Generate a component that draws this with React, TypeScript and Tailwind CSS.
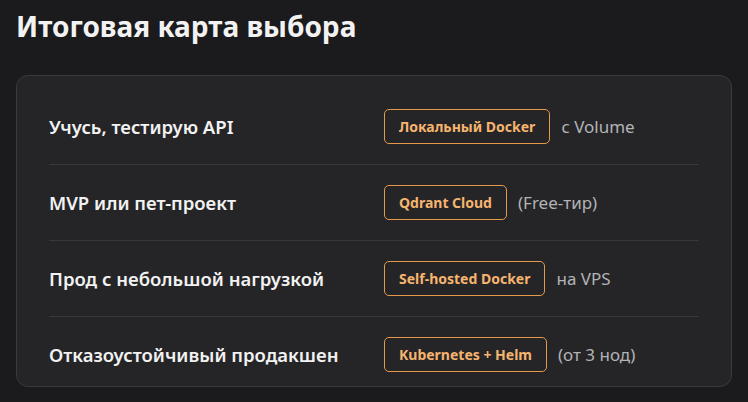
import React from "react";

const rows = [
  { label: "Учусь, тестирую API", badge: "Локальный Docker", note: "с Volume" },
  { label: "MVP или пет-проект", badge: "Qdrant Cloud", note: "(Free-тир)" },
  { label: "Прод с небольшой нагрузкой", badge: "Self-hosted Docker", note: "на VPS" },
  { label: "Отказоустойчивый продакшен", badge: "Kubernetes + Helm", note: "(от 3 нод)" },
];

export default function App() {
  return (
    <div
      className="w-[748px] h-[402px] bg-[#1b1b1d] overflow-hidden"
      style={{ fontFamily: '"Noto Sans", "Open Sans", sans-serif' }}
    >
      <div className="px-4 pt-[6px]">
        <h1 className="text-[28px] leading-[40px] font-bold text-[#f2f2f2]">Итоговая карта выбора</h1>
        <div className="mt-[29px] w-[716px] rounded-[12px] border border-[#3a3a3d] bg-[#252527] px-[32px] pt-[13px]">
          {rows.map((r, i) => (
            <div
              key={i}
              className={`flex items-center ${i < rows.length - 1 ? "border-b border-[#38383b] pt-5 pb-5" : "pt-5 pb-[14px]"}`}
            >
              <div className="w-[335px] shrink-0 text-[18.5px] font-semibold text-[#f2f2f2]">{r.label}</div>
              <div className="h-[35px] flex items-center px-[14px] rounded-[5px] border border-[#e39a4c] text-[14px] font-bold text-[#f6b46f]">
                {r.badge}
              </div>
              <div className="ml-[11px] text-[17px] text-[#b3b3b6]">{r.note}</div>
            </div>
          ))}
        </div>
      </div>
    </div>
  );
}
